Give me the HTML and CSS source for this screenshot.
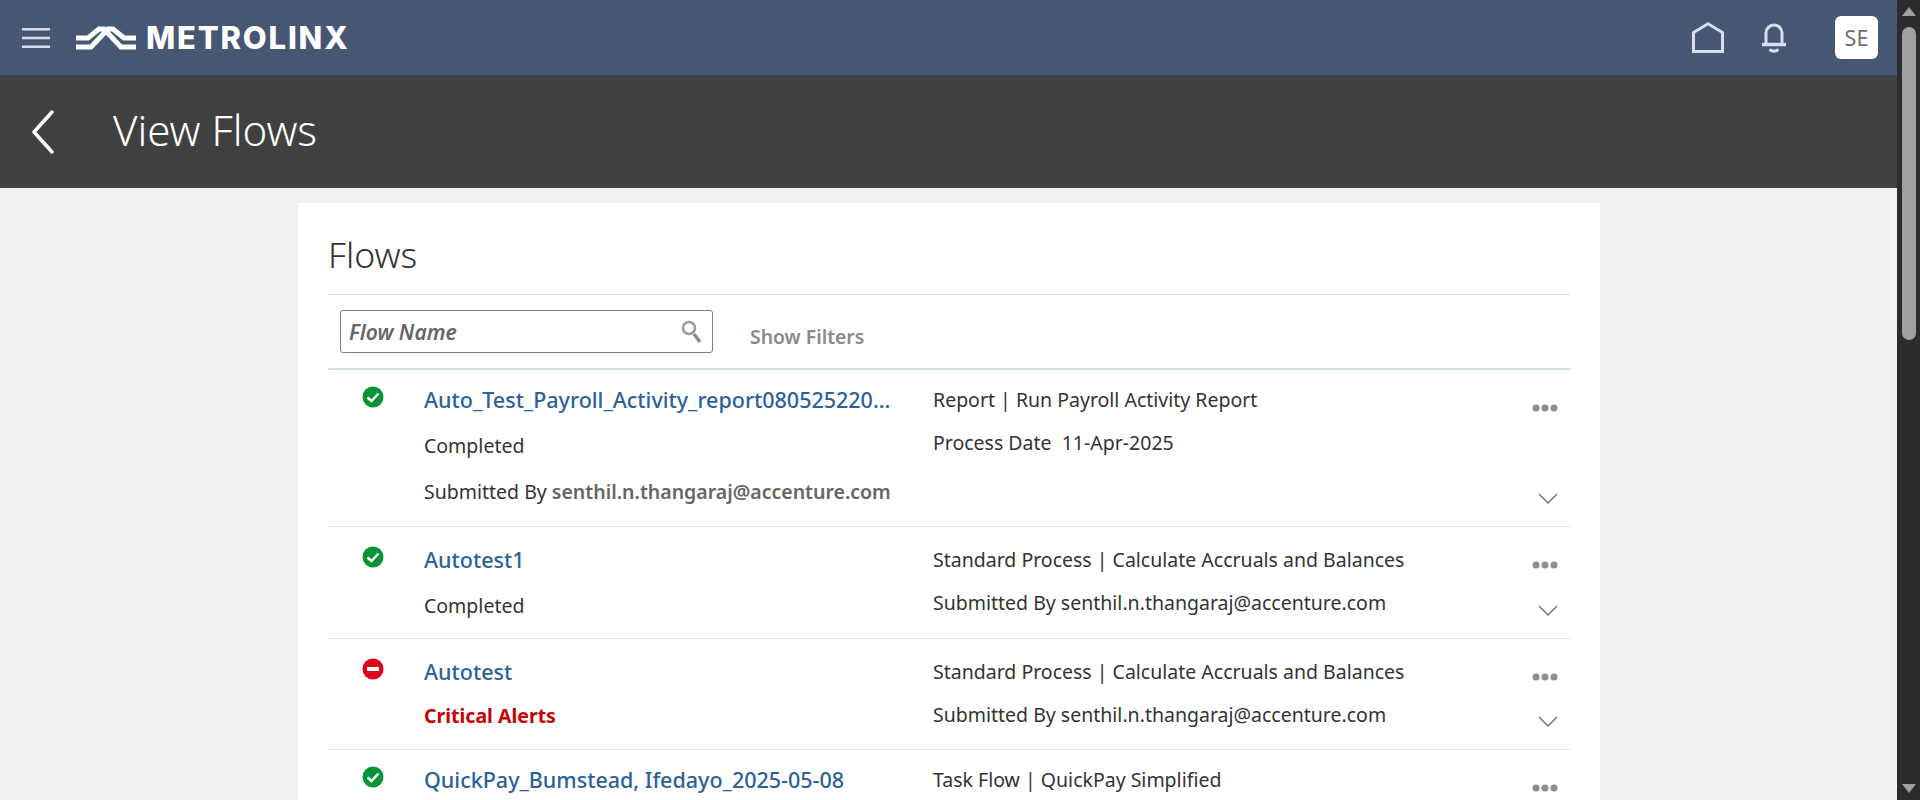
FILE: index.html
```html
<!DOCTYPE html>
<html lang="en">
  <head>
    <meta charset="utf-8">
    <title>View Flows</title>
    <link rel="stylesheet" href="styles.css">
  </head>
  <body>
    <div class="c_pagina">
      <header class="topbar">
        <div class="topbar_left">
          <svg class="ic_menu" width="28" height="20" viewBox="0 0 28 20"><path d="M0 1.200h28M0 10h28M0 18.800h28" stroke="#d5deea" stroke-width="2.500" fill="none"/></svg>
          <svg class="ic_logo" width="60" height="24" viewBox="0 0 60 24"><path d="M0 12h12L23 3h5L45 21h15M60 12H48L37 3h-5L15 21H0" stroke="#fff" stroke-width="5" fill="none"/></svg>
          <span class="logo_text">METROLINX</span>
        </div>
        <div class="topbar_right">
          <svg class="ic_home" width="32" height="31" viewBox="0 0 32 31"><path d="M1.500 29.500V10.500L16 1.800l14.500 8.700v19z" stroke="#d5deea" stroke-width="3" fill="none"/></svg>
          <svg class="ic_bell" width="26" height="30" viewBox="0 0 26 30"><path d="M5 21V10a8 8 0 0 1 16 0v11" stroke="#d5deea" stroke-width="3" fill="none"/><path d="M1 21.500h24" stroke="#d5deea" stroke-width="3.500" fill="none"/><path d="M8.500 26.500q4.500 3.500 9 0" stroke="#d5deea" stroke-width="3" fill="none"/></svg>
          <div class="avatar">SE</div>
        </div>
      </header>
      <div class="titlebar">
        <svg class="ic_back" width="24" height="44" viewBox="0 0 24 44"><path d="M21 2 3 22l18 20" stroke="#fff" stroke-width="3.500" stroke-linecap="round" stroke-linejoin="round" fill="none"/></svg>
        <h1>View Flows</h1>
      </div>
      <main class="c_contenido">
        <section class="card">
          <h2>Flows</h2>
          <div class="search_row">
            <div class="search_box">
              <span>Flow Name</span>
              <svg width="22" height="24" viewBox="0 0 22 24"><circle cx="8" cy="8" r="6" stroke="#9a9a9a" stroke-width="2.500" fill="none"/><path d="M13 14l6 8" stroke="#8a8a8a" stroke-width="3.500" fill="none"/></svg>
            </div>
            <a class="filters">Show Filters</a>
          </div>
          <div class="lista">
            <div class="fila fila_alta">
              <svg class="estado" width="22" height="22" viewBox="0 0 22 22"><circle cx="11" cy="11" r="10.500" fill="#0a9438"/><path d="M5.500 11.500l4 3.500 7-7.500" stroke="#fff" stroke-width="2.500" fill="none"/></svg>
              <div class="col_nombre">
                <a>Auto_Test_Payroll_Activity_report080525220...</a>
                <div>Completed</div>
                <div>Submitted By <b>senthil.n.thangaraj@accenture.com</b></div>
              </div>
              <div class="col_info">
                <div>Report | Run Payroll Activity Report</div>
                <div>Process Date&nbsp; 11-Apr-2025</div>
              </div>
              <div class="col_acciones">
                <svg width="26" height="8" viewBox="0 0 26 8"><circle cx="4" cy="4" r="3.500" fill="#8d8d8d"/><circle cx="13" cy="4" r="3.500" fill="#8d8d8d"/><circle cx="22" cy="4" r="3.500" fill="#8d8d8d"/></svg>
                <svg class="chevron" width="20" height="12" viewBox="0 0 20 12"><path d="M1 1l9 9 9-9" stroke="#777" stroke-width="1.500" fill="none"/></svg>
              </div>
            </div>
            <div class="fila">
              <svg class="estado" width="22" height="22" viewBox="0 0 22 22"><circle cx="11" cy="11" r="10.500" fill="#0a9438"/><path d="M5.500 11.500l4 3.500 7-7.500" stroke="#fff" stroke-width="2.500" fill="none"/></svg>
              <div class="col_nombre">
                <a>Autotest1</a>
                <div>Completed</div>
              </div>
              <div class="col_info">
                <div>Standard Process | Calculate Accruals and Balances</div>
                <div>Submitted By senthil.n.thangaraj@accenture.com</div>
              </div>
              <div class="col_acciones">
                <svg width="26" height="8" viewBox="0 0 26 8"><circle cx="4" cy="4" r="3.500" fill="#8d8d8d"/><circle cx="13" cy="4" r="3.500" fill="#8d8d8d"/><circle cx="22" cy="4" r="3.500" fill="#8d8d8d"/></svg>
                <svg class="chevron" width="20" height="12" viewBox="0 0 20 12"><path d="M1 1l9 9 9-9" stroke="#777" stroke-width="1.500" fill="none"/></svg>
              </div>
            </div>
            <div class="fila fila_alerta">
              <svg class="estado" width="22" height="22" viewBox="0 0 22 22"><circle cx="11" cy="11" r="10.500" fill="#e0001b"/><path d="M5 11h12" stroke="#fff" stroke-width="4" fill="none"/></svg>
              <div class="col_nombre">
                <a>Autotest</a>
                <div class="critico">Critical Alerts</div>
              </div>
              <div class="col_info">
                <div>Standard Process | Calculate Accruals and Balances</div>
                <div>Submitted By senthil.n.thangaraj@accenture.com</div>
              </div>
              <div class="col_acciones">
                <svg width="26" height="8" viewBox="0 0 26 8"><circle cx="4" cy="4" r="3.500" fill="#8d8d8d"/><circle cx="13" cy="4" r="3.500" fill="#8d8d8d"/><circle cx="22" cy="4" r="3.500" fill="#8d8d8d"/></svg>
                <svg class="chevron" width="20" height="12" viewBox="0 0 20 12"><path d="M1 1l9 9 9-9" stroke="#777" stroke-width="1.500" fill="none"/></svg>
              </div>
            </div>
            <div class="fila fila_alta">
              <svg class="estado" width="22" height="22" viewBox="0 0 22 22"><circle cx="11" cy="11" r="10.500" fill="#0a9438"/><path d="M5.500 11.500l4 3.500 7-7.500" stroke="#fff" stroke-width="2.500" fill="none"/></svg>
              <div class="col_nombre">
                <a>QuickPay_Bumstead, Ifedayo_2025-05-08</a>
              </div>
              <div class="col_info">
                <div>Task Flow | QuickPay Simplified</div>
              </div>
              <div class="col_acciones">
                <svg width="26" height="8" viewBox="0 0 26 8"><circle cx="4" cy="4" r="3.500" fill="#8d8d8d"/><circle cx="13" cy="4" r="3.500" fill="#8d8d8d"/><circle cx="22" cy="4" r="3.500" fill="#8d8d8d"/></svg>
              </div>
            </div>
          </div>
        </section>
      </main>
    </div>
    <div class="scrollbar">
      <span class="flecha_arriba"></span>
      <span class="thumb"></span>
      <span class="flecha_abajo"></span>
    </div>
  </body>
</html>
```

FILE: styles.css
```css
* {margin: 0; padding: 0; box-sizing: border-box;}
html, body {height: 100%; overflow: hidden;}
body {display: flex; background-color: #f1f1f1; color: #333; font-family: "Noto Sans", sans-serif; font-size: 19.5px;}
.c_pagina {flex: 1; min-width: 0; height: 100%; overflow: hidden;}

.topbar {height: 75px; background-color: #465774; display: flex; align-items: center; justify-content: space-between; padding: 0 19px 0 22px;}
.topbar_left {display: flex; align-items: center;}
.ic_menu {margin-right: 26px;}
.ic_logo {margin-right: 10px;}
.logo_text {color: #fff; font-family: "Inter", sans-serif; font-weight: 800; font-size: 31px; letter-spacing: 1.8px; line-height: 1;}
.topbar_right {display: flex; align-items: center;}
.ic_bell {margin: 0 48px 0 37px;}
.avatar {width: 43px; height: 43px; border-radius: 6px; background-color: #fff; color: #6f6f6f; display: flex; align-items: center; justify-content: center; font-size: 21.5px;}

.titlebar {height: 113px; background-color: #404040; display: flex; align-items: center; padding: 0 0 4px 31px;}
.ic_back {margin: 4px 58px 0 0;}
h1 {color: #fff; font-weight: 300; font-size: 42px; line-height: 1;}

.c_contenido {padding: 15px 0 0 298px;}
.card {width: 1302px; background-color: #fff; padding: 0 30px; min-height: 700px;}
h2 {font-weight: 300; font-size: 35.5px; color: #333; height: 92px; padding-top: 27px; line-height: 48px; border-bottom: 1px solid #d9e1e8;}
.search_row {height: 73px; display: flex; padding: 15px 0 0 12px;}
.search_box {width: 373px; height: 43px; border: 1px solid #73818f; border-radius: 3px; display: flex; align-items: center; justify-content: space-between; padding: 0 9px 0 8px; color: #666; font-style: italic; font-weight: 600; font-size: 21px;}
.filters {margin: 13px 0 0 37px; color: #8a8a8a; font-weight: 600; font-size: 19.4px; line-height: 28px;}

.lista {border-top: 2px solid #d6dfe7;}
.fila {display: grid; grid-template-columns: 34px 62px 509px 1fr 40px; height: 112px; padding-top: 19px; border-bottom: 1px solid #e8e8e8;}
.fila_alta {height: 157px; padding-top: 16px;}
.fila_alerta {height: 111px;}
.estado {grid-column: 1 / 2; justify-self: end; margin-right: -22px;}
.col_nombre {grid-column: 3; display: flex; flex-direction: column; gap: 18px; line-height: 28px; white-space: nowrap;}
.col_nombre a {color: #2c6199; font-weight: 500; font-size: 21.5px;}
.col_nombre b {color: #666; font-weight: 600;}
.fila_alerta .col_nombre {gap: 16px;}
.critico {color: #cc0000; font-weight: 700;}
.col_info {grid-column: 4; display: flex; flex-direction: column; gap: 15px; line-height: 28px;}
.col_acciones {grid-column: 5; display: flex; flex-direction: column; align-items: flex-end; justify-content: space-between; padding: 15px 12px 21px 0;}
.fila_alta .col_acciones {padding-top: 18px;}

.scrollbar {flex: 0 0 23px; height: 100%; background-color: #2c2c2c; display: flex; flex-direction: column; align-items: center; padding: 7px 0;}
.flecha_arriba {width: 0; height: 0; border: 7px solid transparent; border-top: 0; border-bottom: 9px solid #a0a0a0;}
.thumb {width: 14px; height: 313px; margin-top: 11px; border-radius: 7px; background-color: #a0a0a0;}
.flecha_abajo {width: 0; height: 0; margin-top: auto; border: 7px solid transparent; border-bottom: 0; border-top: 9px solid #a0a0a0;}
```
